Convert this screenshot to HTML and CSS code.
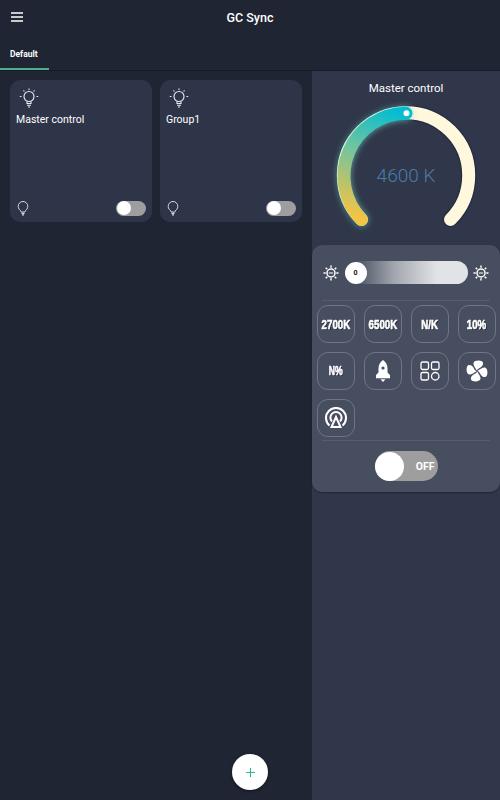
FILE: index.html
```html
<!DOCTYPE html>
<html>
<head>
  <title>GC Sync</title>
  <link rel="stylesheet" href="styles.css">
</head>
<body>
  <svg class="defs">
    <defs>
      <g id="lamp">
        <circle cx="10" cy="8.500" r="5"/>
        <path d="M8 13.500v2h4v-2M8 17.300h4M9 19h2"/>
        <path d="M10 .5v1.500M4.500 2.300l.9 1.200M15.500 2.300l-.9 1.200M.8 8.500h1.700M17.500 8.500h1.700"/>
      </g>
      <g id="bulb">
        <path d="M4 11.200C2.600 10 1.200 8.500 1.200 6.300a4.800 4.800 0 0 1 9.600 0c0 2.200-1.400 3.700-2.800 4.900V12H4z"/>
        <path d="M4.500 13.300h3M5 14.800h2" stroke-width="1.300"/>
      </g>
      <g id="sun">
        <circle cx="9" cy="9" r="4"/>
        <path d="M6.800 9h4.400" class="sun-dash"/>
        <path d="M9 1.500v2.200M9 14.300v2.200M1.500 9h2.200M14.300 9h2.200M3.700 3.700 5.300 5.300M12.700 12.700l1.600 1.600M14.300 3.700 12.700 5.300M5.300 12.700l-1.600 1.600"/>
      </g>
      <path id="blade" d="M10.800 10.500C9.500 8 7 5.500 7.500 3 8.200.5 13 0 15.800 1.200c2.200 1.300 1.500 4.300-1 6-1.700 1.100-3.300 1.500-4 3.300z"/>
    </defs>
  </svg>

  <div class="app">
    <header class="topbar">
      <div class="titlerow">
        <svg class="menu" width="12" height="10" viewBox="0 0 12 10"><path d="M0 1h12M0 5h12M0 9h12"/></svg>
        <span class="title">GC Sync</span>
      </div>
      <div class="tabs">
        <div class="tab">Default</div>
      </div>
    </header>

    <div class="main">
      <section class="groups">
        <div class="card">
          <svg class="lamp" width="20" height="20" viewBox="0 0 20 20"><use href="#lamp"/></svg>
          <div class="card-name">Master control</div>
          <div class="card-foot">
            <svg class="bulb" width="12" height="16" viewBox="0 0 12 16"><use href="#bulb"/></svg>
            <div class="switch"><span class="switch-knob"></span></div>
          </div>
        </div>
        <div class="card">
          <svg class="lamp" width="20" height="20" viewBox="0 0 20 20"><use href="#lamp"/></svg>
          <div class="card-name">Group1</div>
          <div class="card-foot">
            <svg class="bulb" width="12" height="16" viewBox="0 0 12 16"><use href="#bulb"/></svg>
            <div class="switch"><span class="switch-knob"></span></div>
          </div>
        </div>
        <button class="fab">
          <svg width="9" height="9" viewBox="0 0 10 10"><path d="M5 0v10M0 5h10"/></svg>
        </button>
      </section>

      <aside class="side">
        <div class="side-title">Master control</div>
        <div class="gauge">
          <svg width="188" height="156" viewBox="0 0 188 156">
            <defs>
              <linearGradient id="temp" gradientUnits="userSpaceOnUse" x1="50" y1="142" x2="94" y2="36">
                <stop offset="0" stop-color="#f3c345"/>
                <stop offset="0.55" stop-color="#6fc4a0"/>
                <stop offset="1" stop-color="#00bcd4"/>
              </linearGradient>
            </defs>
            <path class="arc-full" d="M49.500 142.500A62.700 62.700 0 1 1 138.500 142.500"/>
            <path class="arc-value" d="M49.500 142.500A62.700 62.700 0 0 1 94 36.300"/>
            <circle class="arc-dot" cx="94.500" cy="36.300" r="3"/>
          </svg>
          <div class="gauge-value">4600 K</div>
        </div>

        <div class="controls">
          <div class="slider-row">
            <svg class="sun" width="18" height="18" viewBox="0 0 18 18"><use href="#sun"/></svg>
            <div class="slider"><span class="slider-knob">0</span></div>
            <svg class="sun" width="18" height="18" viewBox="0 0 18 18"><use href="#sun"/></svg>
          </div>
          <div class="divider"></div>

          <div class="btn-grid">
            <button class="btn"><span class="btn-text">2700K</span></button>
            <button class="btn"><span class="btn-text">6500K</span></button>
            <button class="btn"><span class="btn-text">N/K</span></button>
            <button class="btn"><span class="btn-text">10%</span></button>
            <button class="btn"><span class="btn-text small">N%</span></button>
            <button class="btn">
              <svg width="16" height="22" viewBox="0 0 16 22"><path class="solid" d="M8 0c3 2.200 4.500 5 4.500 8.500v4l2.500 2.500v3.200H1V15l2.500-2.500v-4C3.500 5 5 2.200 8 0z"/><circle class="hole" cx="8" cy="8" r="1.600"/><path class="solid" d="M5.500 19.300h5L8 22z"/></svg>
            </button>
            <button class="btn">
              <svg width="20" height="20" viewBox="0 0 20 20"><g class="line"><rect x="1" y="1" width="7.500" height="7.500" rx="1.500"/><rect x="11.500" y="1" width="7.500" height="7.500" rx="1.500"/><rect x="1" y="11.500" width="7.500" height="7.500" rx="1.500"/><circle cx="15.250" cy="15.250" r="3.750"/></g></svg>
            </button>
            <button class="btn">
              <svg width="22" height="22" viewBox="0 0 22 22"><g class="solid"><use href="#blade"/><use href="#blade" transform="rotate(90 11 11)"/><use href="#blade" transform="rotate(180 11 11)"/><use href="#blade" transform="rotate(270 11 11)"/></g></svg>
            </button>
            <button class="btn">
              <svg width="22" height="22" viewBox="0 0 22 22"><g class="line thick"><path d="M4.500 18.500a10 10 0 1 1 13 0"/><path d="M7 14.500a5.600 5.600 0 1 1 8 0"/><path d="M11 10 6.500 20h9z"/></g></svg>
            </button>
          </div>
          <div class="divider"></div>

          <div class="power-row">
            <div class="power">
              <span class="power-knob"></span>
              <span class="power-label">OFF</span>
            </div>
          </div>
        </div>
      </aside>
    </div>
  </div>
</body>
</html>
```

FILE: styles.css
```css
body {
  margin: 0;
  font-family: Roboto, "Liberation Sans", sans-serif;
  background-color: #1f2533;
  color: #fff;
}

.defs {
  display: none;
}

.app {
  display: flex;
  flex-direction: column;
  height: 800px;
  overflow: hidden;
}

/* top bar and tabs */
.topbar {
  height: 71px;
  box-sizing: border-box;
  background-color: #1f2533;
  border-bottom: 1px solid #171b26;
  flex-shrink: 0;
}

.titlerow {
  height: 35px;
  display: flex;
  align-items: center;
  justify-content: center;
  position: relative;
}

.menu {
  position: absolute;
  left: 11px;
  top: 12px;
  stroke: #fff;
  stroke-width: 1.300;
  fill: none;
}

.title {
  font-size: 12.500px;
  font-weight: 500;
}

.tabs {
  height: 35px;
  display: flex;
}

.tab {
  width: 49px;
  box-sizing: border-box;
  padding: 14px 0 0 10px;
  font-size: 8.500px;
  font-weight: 700;
  border-bottom: 2px solid #4fae92;
}

/* left side */
.main {
  flex: 1;
  display: flex;
}

.groups {
  width: 312px;
  box-sizing: border-box;
  padding: 9px 10px 0;
  display: flex;
  gap: 8px;
  align-items: flex-start;
  position: relative;
}

.card {
  width: 142px;
  height: 142px;
  box-sizing: border-box;
  padding: 8px 6px 6px 9px;
  background-color: #2f3548;
  border-radius: 10px;
  display: flex;
  flex-direction: column;
}

.lamp {
  display: block;
  fill: none;
  stroke: #e8ebf2;
  stroke-width: 1.100;
}

.card-name {
  margin: 5px 0 0 -3px;
  font-size: 10.500px;
  line-height: 13px;
}

.card-foot {
  margin-top: auto;
  display: flex;
  align-items: center;
  justify-content: space-between;
}

.bulb {
  margin-left: -2px;
  fill: none;
  stroke: #d5d8e0;
  stroke-width: 1;
}

.switch {
  width: 30px;
  height: 15px;
  padding-left: 1px;
  box-sizing: border-box;
  border-radius: 8px;
  background-color: #9e9e9e;
  display: flex;
  align-items: center;
}

.switch-knob {
  width: 14px;
  height: 14px;
  border-radius: 50%;
  background-color: #fff;
}

.fab {
  position: absolute;
  left: 232px;
  top: 683px;
  width: 36px;
  height: 36px;
  padding: 0;
  border: none;
  border-radius: 50%;
  background-color: #fff;
  box-shadow: 0 1px 3px rgba(0, 0, 0, 0.5);
  display: flex;
  align-items: center;
  justify-content: center;
}

.fab svg {
  stroke: #2fb796;
  stroke-width: 1.200;
}

/* right side */
.side {
  width: 188px;
  background-color: #30374a;
  display: flex;
  flex-direction: column;
}

.side-title {
  margin-top: 10px;
  text-align: center;
  font-size: 11.500px;
  line-height: 15px;
}

.gauge {
  height: 149px;
  position: relative;
}

.gauge svg {
  display: block;
  margin-top: -19px;
  overflow: visible;
}

.arc-full,
.arc-value {
  fill: none;
  stroke-width: 13;
  stroke-linecap: round;
}

.arc-full {
  stroke: #fff8dc;
  filter: drop-shadow(0 0 1px #0b1530);
}

.arc-value {
  stroke: url(#temp);
  filter: drop-shadow(0 0 3px rgba(120, 230, 210, 0.7));
}

.arc-dot {
  fill: #fff;
}

.gauge-value {
  position: absolute;
  left: 0;
  right: 0;
  top: 69px;
  text-align: center;
  font-size: 19px;
  line-height: 22px;
  font-weight: 300;
  color: #4a7ca8;
}

.controls {
  height: 247px;
  box-sizing: border-box;
  background-color: #474e60;
  border-radius: 10px;
  box-shadow: 0 1px 2px rgba(0, 0, 0, 0.3);
}

.slider-row {
  height: 55px;
  margin: 0 10px;
  display: flex;
  align-items: center;
  justify-content: space-between;
}

.divider {
  height: 1px;
  margin: 0 10px;
  background-color: #565d6f;
}

.sun {
  fill: none;
  stroke: #fff;
  stroke-width: 1.500;
  flex-shrink: 0;
}

.slider {
  width: 123px;
  height: 23px;
  border-radius: 12px;
  background: linear-gradient(to right, #474e60 8%, #a3a6b0 40%, #e2e3e6 75%);
  display: flex;
  align-items: center;
}

.slider-knob {
  width: 22px;
  height: 22px;
  border-radius: 50%;
  background-color: #fff;
  color: #111;
  font-size: 7px;
  font-weight: 700;
  display: flex;
  align-items: center;
  justify-content: center;
}

.btn-grid {
  padding: 4px 4px 3px 5px;
  display: grid;
  grid-template-columns: repeat(4, 38px);
  grid-auto-rows: 38px;
  gap: 9px;
}

.btn {
  padding: 0;
  background: none;
  border: 1px solid #6f7585;
  border-radius: 11px;
  color: #fff;
  font-family: "Liberation Sans", sans-serif;
  display: flex;
  align-items: center;
  justify-content: center;
}

.btn-text {
  display: inline-block;
  font-size: 13.500px;
  font-weight: 700;
  transform: scaleX(0.720);
  text-shadow: 1px 1px 0 #10141f;
  -webkit-text-stroke: 0.600px #fff;
}

.btn-text.small {
  font-size: 12px;
}

.solid {
  fill: #fff;
}

.hole {
  fill: #474e60;
}

.line {
  fill: none;
  stroke: #fff;
  stroke-width: 1.300;
}

.thick {
  stroke-width: 2;
}

.sun-dash {
  stroke-width: 1;
}

.power-row {
  padding-top: 10px;
  display: flex;
  justify-content: center;
}

.power {
  width: 63px;
  height: 30px;
  border-radius: 15px;
  background-color: #9e9e9e;
  display: flex;
  align-items: center;
  justify-content: space-between;
  padding-right: 3px;
  box-sizing: border-box;
}

.power-knob {
  width: 29px;
  height: 29px;
  border-radius: 50%;
  background-color: #fff;
}

.power-label {
  font-size: 10.500px;
  font-weight: 700;
}
```
